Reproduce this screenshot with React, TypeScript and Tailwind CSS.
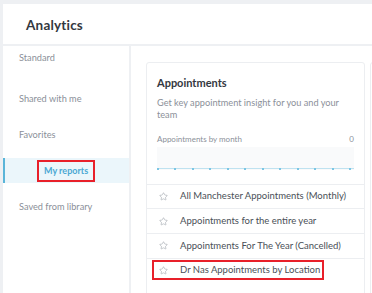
import { Star } from "lucide-react";

const navItems = [
  { label: "Standard", h: "h-[41px]" },
  { label: "Shared with me", h: "h-[36px]" },
  { label: "Favorites", h: "h-[30px]" },
];

const reports = [
  "All Manchester Appointments (Monthly)",
  "Appointments for the entire year",
  "Appointments For The Year (Cancelled)",
  "Dr Nas Appointments by Location",
];

export default function App() {
  const markers = Array.from({ length: 12 }, (_, i) => i);

  return (
    <div className="w-[372px] h-[293px] overflow-hidden bg-[#eef0f3] pt-[4px] pl-[3px] font-['Lato',sans-serif]">
      {/* Header */}
      <div className="h-[40px] bg-white flex items-center pl-[23px] pt-[2px]">
        <h1 className="text-[13.5px] font-bold text-[#333840] tracking-[0.2px]">Analytics</h1>
      </div>

      <div className="flex mt-[2px] h-[260px] gap-[2px]">
        {/* Sidebar */}
        <div className="w-[126px] bg-white pt-[5px] shrink-0">
          {navItems.map((n) => (
            <div key={n.label} className={`${n.h} pl-[16px] text-[9.2px] text-[#8b9099]`}>
              {n.label}
            </div>
          ))}
          <div className="h-[25px] bg-[#ebf6fb] border-l-2 border-[#5ab5d9] flex items-center pl-[32px]">
            <span className="border-2 border-[#e8202a] px-[5px] h-[22px] flex items-center text-[9px] font-bold text-[#4aa8d3] whitespace-nowrap">
              My reports
            </span>
          </div>
          <div className="pl-[16px] pt-[17px] text-[9.2px] text-[#8b9099]">Saved from library</div>
        </div>

        {/* Main */}
        <div className="flex-1 bg-white pt-[16px] pl-[15px] flex gap-[5px] overflow-hidden">
          <div className="w-[219px] shrink-0 h-[260px] border border-[#eceef1] rounded-[3px]">
            <div className="px-[10px] pt-[12px]">
              <h2 className="text-[11px] font-bold text-[#333840]">Appointments</h2>
              <p className="mt-[5px] text-[9.2px] leading-[12px] text-[#8b9099]">
                Get key appointment insight for you and your team
              </p>
              <div className="mt-[12px] flex justify-between text-[8px] text-[#8b9099]">
                <span>Appointments by month</span>
                <span>0</span>
              </div>
              <div className="mt-[2px] h-[23px] bg-[#f9fafb] relative">
                <div className="absolute left-0 right-0 bottom-[1px] h-px bg-[#bfe2f0]" />
                {markers.map((i) => (
                  <div
                    key={i}
                    className="absolute bottom-0 w-[2px] h-[2px] bg-[#7cc6e4]"
                    style={{ left: `${i * 17.45}px` }}
                  />
                ))}
              </div>
            </div>
            <div className="mt-[14px]">
              {reports.map((r, i) => (
                <div
                  key={r}
                  className={`h-[24.7px] border-t border-[#eceef1] flex items-center ${i === 3 ? "pl-[5px]" : "pl-[12px]"}`}
                >
                  {i === 3 ? (
                    <div className="border-2 border-[#e8202a] h-[20px] w-[172px] flex items-center pl-[5px] gap-[12px] whitespace-nowrap">
                      <Star size={9} strokeWidth={1.5} className="text-[#9aa0a8] shrink-0" />
                      <span className="text-[9.5px] text-[#4a4f57]">{r}</span>
                    </div>
                  ) : (
                    <div className="flex items-center gap-[12px] whitespace-nowrap">
                      <Star size={9} strokeWidth={1.5} className="text-[#9aa0a8] shrink-0" />
                      <span className="text-[9.5px] text-[#4a4f57]">{r}</span>
                    </div>
                  )}
                </div>
              ))}
            </div>
          </div>
          <div className="w-[40px] shrink-0 h-[260px] border border-[#eceef1] rounded-[3px]" />
        </div>
      </div>
    </div>
  );
}
